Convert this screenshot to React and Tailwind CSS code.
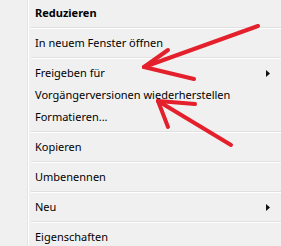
const Separator = () => (
  <div className="py-[3px] pl-[2px]">
    <div className="h-px bg-[#e0e0e0]" />
    <div className="h-px bg-white" />
  </div>
);

const Item = ({ label, bold, submenu }) => (
  <div className="h-[22px] flex items-center pl-[6px] pr-[11px]">
    <span className={`flex-1 text-[11px] text-black ${bold ? 'font-bold' : ''}`}>{label}</span>
    {submenu && (
      <svg width="4" height="7" viewBox="0 0 4 7" className="block">
        <path d="M0 0 L4 3.5 L0 7 Z" fill="#111" />
      </svg>
    )}
  </div>
);

const App = () => {
  return (
    <div
      className="relative w-[281px] h-[246px] overflow-hidden bg-[#f0f0f0] flex"
      style={{ fontFamily: '"Noto Sans", "Open Sans", sans-serif' }}
    >
      {/* icon gutter */}
      <div className="w-[27px] shrink-0" />
      <div className="w-px bg-[#e2e3e3]" />
      <div className="w-px bg-white" />

      <div className="flex-1 pt-[2px]">
        <Item label="Reduzieren" bold />
        <Separator />
        <Item label="In neuem Fenster öffnen" />
        <Separator />
        <Item label="Freigeben für" submenu />
        <Item label="Vorgängerversionen wiederherstellen" />
        <Item label="Formatieren..." />
        <Separator />
        <Item label="Kopieren" />
        <Separator />
        <Item label="Umbenennen" />
        <Separator />
        <Item label="Neu" submenu />
        <Separator />
        <Item label="Eigenschaften" />
      </div>

      {/* red hand-drawn arrows on top */}
      <svg className="absolute inset-0 pointer-events-none" width="281" height="246" viewBox="0 0 281 246">
        <g stroke="#e3202b" strokeWidth="4" strokeLinecap="round" strokeLinejoin="round" fill="none">
          <path d="M258 26 L144 67" />
          <path d="M144 67 L194 79" />
          <path d="M144 67 L168 50" />
          <path d="M231 145 L158 101" />
          <path d="M158 101 L195 104" />
          <path d="M158 101 L168 127" />
        </g>
      </svg>
    </div>
  );
};

export default App;
